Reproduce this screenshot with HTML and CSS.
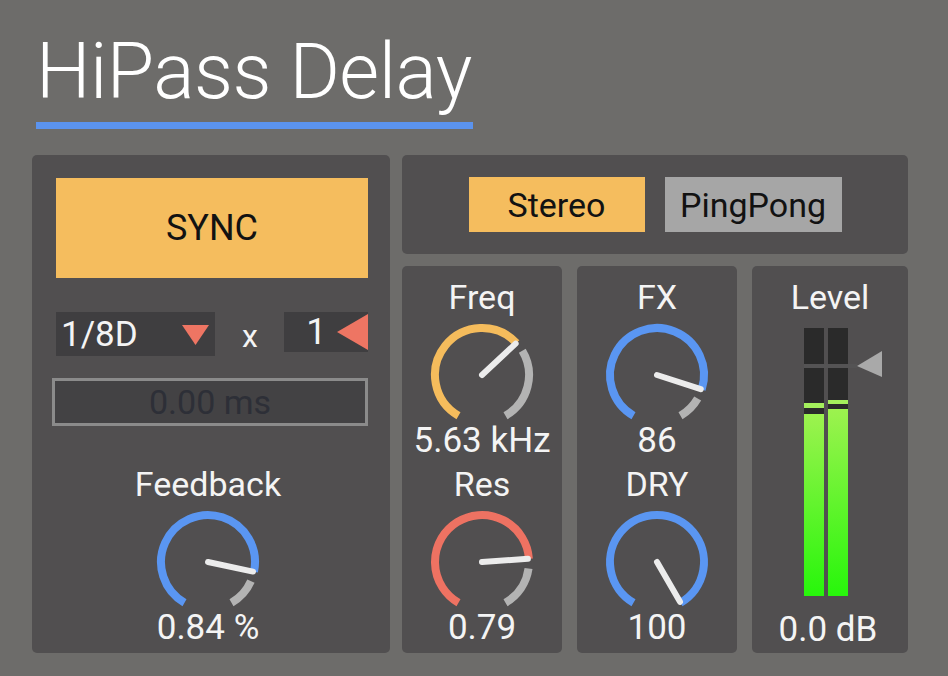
FILE: index.html
```html
<!DOCTYPE html>
<html>
<head>
<meta charset="utf-8">
<title>HiPass Delay</title>
<link rel="stylesheet" href="styles.css">
</head>
<body>
<div class="device">
  <header class="title-wrap"><h1 class="title">HiPass Delay</h1></header>
  <main class="rack">
    <section class="panel timing">
      <button class="sync">SYNC</button>
      <div class="division-row">
        <div class="dropdown">
          <span>1/8D</span>
          <svg class="tri-down" viewBox="0 0 27 20"><polygon points="0,0 27,0 13.5,20"/></svg>
        </div>
        <span class="times">x</span>
        <div class="number-box">
          <span>1</span>
          <svg class="tri-left" viewBox="0 0 31 36"><polygon points="0,18 31,0 31,36"/></svg>
        </div>
      </div>
      <div class="ms-box">0.00 ms</div>
      <div class="dial feedback">
        <div class="dial-label">Feedback</div>
        <svg class="knob blue" viewBox="0 0 112 108">
          <path class="track-on" d="M32.5 100.7A47 47 0 1 1 101.97 69.77"/>
          <path class="track-off" d="M98.94 79.12A47 47 0 0 1 79.5 100.7"/>
          <line class="needle" x1="56" y1="60" x2="100.99" y2="69.56"/>
        </svg>
        <div class="dial-value">0.84 %</div>
      </div>
    </section>

    <div class="right">
      <section class="panel mode">
        <button class="mode-btn on">Stereo</button>
        <button class="mode-btn off">PingPong</button>
      </section>

      <div class="strip">
        <section class="panel col">
          <div class="dial">
            <div class="dial-label">Freq</div>
            <svg class="knob orange" viewBox="0 0 112 108">
              <path class="track-on" d="M32.5 100.7A47 47 0 1 1 90.37 27.95"/>
              <path class="track-off" d="M96.29 35.79A47 47 0 0 1 79.5 100.7"/>
              <line class="needle" x1="56" y1="60" x2="89.64" y2="28.63"/>
            </svg>
            <div class="dial-value">5.63 kHz</div>
          </div>
          <div class="dial second">
            <div class="dial-label">Res</div>
            <svg class="knob red" viewBox="0 0 112 108">
              <path class="track-on" d="M32.5 100.7A47 47 0 1 1 102.89 56.72"/>
              <path class="track-off" d="M102.54 66.54A47 47 0 0 1 79.5 100.7"/>
              <line class="needle" x1="56" y1="60" x2="101.89" y2="56.79"/>
            </svg>
            <div class="dial-value">0.79</div>
          </div>
        </section>

        <section class="panel col">
          <div class="dial">
            <div class="dial-label">FX</div>
            <svg class="knob blue" viewBox="0 0 112 108">
              <path class="track-on" d="M32.5 100.7A47 47 0 1 1 100.70 74.52"/>
              <path class="track-off" d="M96.70 83.5A47 47 0 0 1 79.5 100.7"/>
              <line class="needle" x1="56" y1="60" x2="99.75" y2="74.21"/>
            </svg>
            <div class="dial-value">86</div>
          </div>
          <div class="dial second">
            <div class="dial-label">DRY</div>
            <svg class="knob blue" viewBox="0 0 112 108">
              <path class="track-on" d="M32.5 100.7A47 47 0 1 1 79.5 100.7"/>
              <line class="needle" x1="56" y1="60" x2="79" y2="99.84"/>
            </svg>
            <div class="dial-value">100</div>
          </div>
        </section>

        <section class="panel level">
          <div class="dial-label">Level</div>
          <svg class="meter" viewBox="0 0 80 268">
            <defs>
              <linearGradient id="meter-fill" x1="0" y1="0" x2="0" y2="1">
                <stop offset="0" stop-color="#9df24f"/>
                <stop offset="1" stop-color="#27f60b"/>
              </linearGradient>
            </defs>
            <rect class="well" x="0" y="0" width="20" height="268"/>
            <rect class="well" x="24" y="0" width="20" height="268"/>
            <rect class="peak" x="0" y="75" width="20" height="5"/>
            <rect class="fill" x="0" y="86" width="20" height="182"/>
            <rect class="peak" x="24" y="72" width="20" height="4"/>
            <rect class="fill" x="24" y="81" width="20" height="187"/>
            <rect class="divider" x="0" y="36" width="53" height="4"/>
            <polygon class="thumb" points="53,38 78,23 78,49"/>
          </svg>
          <div class="dial-value level-value">0.0 dB</div>
        </section>
      </div>
    </div>
  </main>
</div>
</body>
</html>
```

FILE: styles.css
```css
html, body {
  margin: 0;
  padding: 0;
}

body {
  width: 948px;
  height: 676px;
  overflow: hidden;
  background: #6d6c6a;
  font-family: Roboto, "Liberation Sans", sans-serif;
  color: #f4f4f4;
}

/* heading */
.title-wrap {
  display: flex;
  padding: 32px 0 0 36px;
}

.title {
  margin: 0;
  padding: 0 1px 10px 0;
  font-size: 77px;
  line-height: 80px;
  font-weight: 300;
  letter-spacing: -0.5px;
  color: #ffffff;
  border-bottom: 7px solid #5b93ee;
}

/* main rack */
.rack {
  display: grid;
  grid-template-columns: 358px 506px;
  column-gap: 12px;
  margin: 26px 0 0 32px;
  height: 498px;
}

.panel {
  background: #514f50;
  border-radius: 5px;
}

button {
  font-family: inherit;
  border: none;
  padding: 0;
  margin: 0;
  color: #121212;
}

/* left timing panel */
.timing {
  display: flex;
  flex-direction: column;
  padding: 23px 22px 0 24px;
}

.sync {
  height: 100px;
  width: 100%;
  background: #f5bd5e;
  font-size: 36px;
}

.division-row {
  display: flex;
  align-items: center;
  height: 44px;
  margin-top: 34px;
}

.dropdown {
  width: 160px;
  height: 44px;
  box-sizing: border-box;
  background: #3f3e40;
  display: flex;
  align-items: center;
  justify-content: space-between;
  padding: 0 6px 0 5px;
  font-size: 35px;
}

.tri-down {
  width: 27px;
  height: 20px;
  margin-top: 2px;
}

.tri-down polygon,
.tri-left polygon {
  fill: #ee7563;
}

.times {
  width: 69px;
  text-align: center;
  font-size: 32px;
  padding-top: 4px;
}

.number-box {
  width: 84px;
  height: 40px;
  box-sizing: border-box;
  background: #3f3e40;
  display: flex;
  align-items: center;
  padding-left: 22px;
  font-size: 36px;
  align-self: flex-start;
}

.tri-left {
  width: 31px;
  height: 36px;
  margin-left: auto;
}

.ms-box {
  margin: 22px 0 0 -4px;
  width: 316px;
  height: 48px;
  box-sizing: border-box;
  border: 3px solid #8b8b8b;
  background: #434244;
  text-align: center;
  font-size: 34px;
  line-height: 42px;
  color: #2d2f37;
}

/* dials */
.dial {
  display: flex;
  flex-direction: column;
  align-items: center;
}

.dial.second {
  margin-top: 7px;
}

.dial.feedback {
  margin-top: 40px;
  padding-right: 8px;
}

.dial-label {
  font-size: 34px;
  line-height: 36px;
  height: 36px;
  text-align: center;
}

.dial-value {
  font-size: 35px;
  line-height: 36px;
  height: 36px;
  text-align: center;
  white-space: nowrap;
}

.knob {
  display: block;
  width: 112px;
  height: 108px;
}

.knob path {
  fill: none;
  stroke-width: 8;
  stroke-linecap: butt;
}

.knob .track-off {
  stroke: #b3b3b3;
}

.knob.blue .track-on { stroke: #5a96f2; }
.knob.orange .track-on { stroke: #f5bc5c; }
.knob.red .track-on { stroke: #ee7262; }

.knob .needle {
  stroke: #ececec;
  stroke-width: 6;
  stroke-linecap: round;
}

/* right column */
.right {
  display: flex;
  flex-direction: column;
  gap: 12px;
}

.mode {
  height: 99px;
  display: flex;
  justify-content: center;
  align-items: center;
  gap: 20px;
}

.mode-btn {
  height: 55px;
  font-size: 34px;
}

.mode-btn.on {
  width: 176px;
  background: #f5bd5e;
}

.mode-btn.off {
  width: 177px;
  background: #a6a6a6;
}

.strip {
  display: flex;
  gap: 15px;
  height: 387px;
}

.col {
  width: 160px;
  padding-top: 13px;
  box-sizing: border-box;
  display: flex;
  flex-direction: column;
  align-items: center;
}

/* level meter */
.level {
  width: 156px;
  padding-top: 13px;
  box-sizing: border-box;
  display: flex;
  flex-direction: column;
  align-items: center;
}

.meter {
  display: block;
  width: 80px;
  height: 268px;
  margin: 13px 0 0 52px;
  align-self: flex-start;
}

.meter .well { fill: #2a2a2a; }
.meter .peak { fill: #a4ef5c; }
.meter .fill { fill: url(#meter-fill); }
.meter .divider { fill: #545354; }
.meter .thumb { fill: #a9a9a9; }

.level-value {
  margin-top: 16px;
  margin-right: 4px;
}
```
